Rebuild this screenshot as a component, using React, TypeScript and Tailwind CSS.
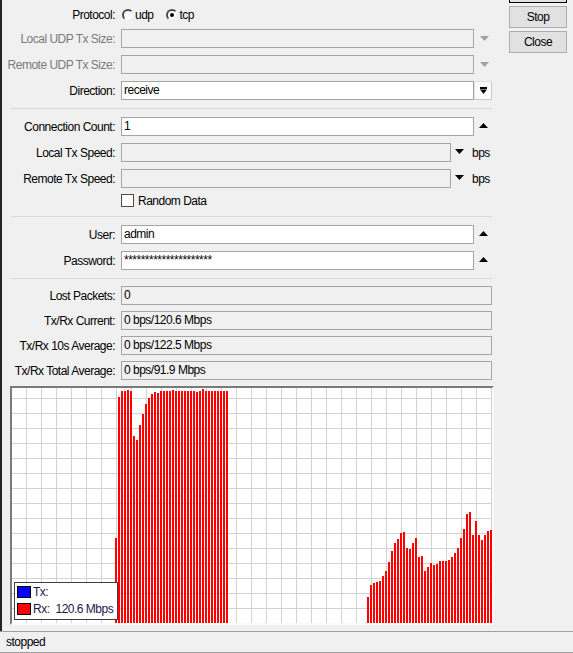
import React from "react";

const leftTops = [
  538, 397, 391, 391, 390, 391, 436, 440, 425, 414, 404, 398, 394, 392, 393, 391, 391, 391, 391, 390,
  391, 391, 391, 391, 391, 391, 391, 392, 391, 389, 391, 391, 391, 391, 391, 391, 391, 391,
];
const rightTops = [
  597, 585, 583, 582, 581, 576, 571, 562, 551, 543, 539, 533, 532, 548, 549, 543, 538, 557, 556, 571,
  567, 563, 565, 564, 561, 561, 561, 560, 557, 553, 548, 538, 529, 514, 512, 535, 521, 535, 540, 535,
  531, 530,
];

function Row({
  label,
  disabled,
  mt,
  children,
}: {
  label?: string;
  disabled?: boolean;
  mt: string;
  children?: React.ReactNode;
}) {
  return (
    <div className={`flex h-[19px] shrink-0 items-center ${mt}`}>
      <div className={`w-[113px] shrink-0 whitespace-nowrap text-right ${disabled ? "text-[#7a7a7a]" : "text-black"}`}>
        {label}
      </div>
      <div className="ml-[6px] flex h-full items-center">{children}</div>
    </div>
  );
}

function Field({ w, white, children }: { w: string; white?: boolean; children?: React.ReactNode }) {
  return (
    <div
      className={`${w} h-[19px] shrink-0 overflow-hidden whitespace-nowrap border border-[#a5a5a5] pl-[2px] leading-[17px] ${
        white ? "bg-white" : "bg-[#f0f0f0]"
      }`}
    >
      {children}
    </div>
  );
}

function Up() {
  return (
    <svg width="9" height="5" viewBox="0 0 9 5" className="block">
      <polygon points="0,5 4.5,0 9,5" fill="#000" />
    </svg>
  );
}

function Down({ color = "#000" }: { color?: string }) {
  return (
    <svg width="9" height="5" viewBox="0 0 9 5" className="block">
      <polygon points="0,0 9,0 4.5,5" fill={color} />
    </svg>
  );
}

function Separator({ mt }: { mt: string }) {
  return <div className={`ml-[9px] h-px w-[481px] shrink-0 bg-[#d9d9d9] ${mt}`} />;
}

function Radio({ checked }: { checked?: boolean }) {
  return (
    <div className="flex h-[12px] w-[12px] items-center justify-center rounded-full border-2 border-b-[#f2f2f2] border-l-[#4a4a4a] border-r-[#f2f2f2] border-t-[#4a4a4a] bg-white">
      {checked && <div className="h-[4px] w-[4px] rounded-full bg-black" />}
    </div>
  );
}

function Chart() {
  const W = 480;
  const H = 235;
  const vlines = Array.from({ length: 32 }, (_, j) => 14 + 15 * j);
  const hlines = Array.from({ length: 15 }, (_, j) => 10 + 15 * j);
  return (
    <div className="relative ml-[8px] mt-[6px] h-[239px] w-[484px] shrink-0 border-2 border-b-[#fafafa] border-l-[#7a7a7a] border-r-[#fafafa] border-t-[#7a7a7a] bg-white">
      <svg width={W} height={H} viewBox={`0 0 ${W} ${H}`} shapeRendering="crispEdges" className="block">
        {vlines.map((x) => (
          <rect key={"v" + x} x={x} y={0} width={1} height={H} fill="#d2d2d2" />
        ))}
        {hlines.map((y) => (
          <rect key={"h" + y} x={0} y={y} width={W} height={1} fill="#d2d2d2" />
        ))}
        {leftTops.map((t, k) => (
          <rect key={"l" + k} x={103 + 3 * k} y={t - 388} width={2} height={623 - t} fill="#ff0000" />
        ))}
        {rightTops.map((t, k) => (
          <rect key={"r" + k} x={355 + 3 * k} y={t - 388} width={2} height={623 - t} fill="#ff0000" />
        ))}
      </svg>
      <div className="absolute left-[2px] top-[194px] flex h-[38px] w-[104px] flex-col border border-[#3c3c3c] bg-white pl-[2px] pt-[3px] text-[#1e1450]">
        <div className="flex h-[12px] items-center">
          <div className="h-[12px] w-[14px] border border-black bg-[#0000ff]" />
          <span className="ml-[2px] leading-none">Tx:</span>
        </div>
        <div className="mt-[5px] flex h-[12px] items-center">
          <div className="h-[12px] w-[14px] border border-black bg-[#ff0000]" />
          <span className="ml-[2px] leading-none">Rx:</span>
          <span className="ml-[6px] leading-none">120.6 Mbps</span>
        </div>
      </div>
    </div>
  );
}

function Button({ label, className }: { label?: string; className: string }) {
  return (
    <div
      className={`flex h-[22px] w-[58px] shrink-0 items-center justify-center border bg-[#e1e1e1] ${className}`}
    >
      {label}
    </div>
  );
}

export default function App() {
  return (
    <div className="flex h-[653px] w-[573px] flex-col overflow-hidden bg-[#f0f0f0] font-['Liberation_Sans',Arial,sans-serif] text-[12px] tracking-[-0.5px] text-black">
      <div className="flex h-[631px] shrink-0">
        <div className="flex h-full w-[500px] shrink-0 flex-col border-l-2 border-[#232323]">
          <Row label="Protocol:" mt="mt-[5px]">
            <div className="ml-[1px] flex items-center">
              <Radio />
              <span className="ml-[1px]">udp</span>
              <div className="ml-[12px]">
                <Radio checked />
              </div>
              <span className="ml-[2px]">tcp</span>
            </div>
          </Row>
          <Row label="Local UDP Tx Size:" disabled mt="mt-[5px]">
            <Field w="w-[353px]" />
            <div className="ml-[6px]">
              <Down color="#a0a0a0" />
            </div>
          </Row>
          <Row label="Remote UDP Tx Size:" disabled mt="mt-[7px]">
            <Field w="w-[353px]" />
            <div className="ml-[6px]">
              <Down color="#a0a0a0" />
            </div>
          </Row>
          <Row label="Direction:" mt="mt-[7px]">
            <Field w="w-[353px]" white>
              receive
            </Field>
            <div className="flex h-[19px] w-[18px] items-center justify-center border border-[#e2e2e2] border-b-[#c9c9c9] border-r-[#c9c9c9] bg-[#fbfbfb]">
              <svg width="7" height="7" viewBox="0 0 7 7" className="block" shapeRendering="crispEdges">
                <rect x="0" y="0" width="7" height="1.5" fill="#000" />
                <polygon points="0,2.5 7,2.5 3.5,7" fill="#000" shapeRendering="auto" />
              </svg>
            </div>
          </Row>
          <Separator mt="mt-[8px]" />
          <Row label="Connection Count:" mt="mt-[8px]">
            <Field w="w-[353px]" white>
              1
            </Field>
            <div className="ml-[5px] -translate-y-[1px]">
              <Up />
            </div>
          </Row>
          <Row label="Local Tx Speed:" mt="mt-[7px]">
            <Field w="w-[330px]" />
            <div className="ml-[4px] -translate-y-[1px]">
              <Down />
            </div>
            <span className="ml-[8px]">bps</span>
          </Row>
          <Row label="Remote Tx Speed:" mt="mt-[7px]">
            <Field w="w-[330px]" />
            <div className="ml-[4px] -translate-y-[1px]">
              <Down />
            </div>
            <span className="ml-[8px]">bps</span>
          </Row>
          <div className="mt-[6px] flex h-[13px] shrink-0 items-center">
            <div className="w-[113px] shrink-0" />
            <div className="ml-[6px] h-[13px] w-[13px] border border-[#4d4d4d] bg-white" />
            <span className="ml-[4px]">Random Data</span>
          </div>
          <Separator mt="mt-[9px]" />
          <Row label="User:" mt="mt-[8px]">
            <Field w="w-[353px]" white>
              admin
            </Field>
            <div className="ml-[5px] -translate-y-[1px]">
              <Up />
            </div>
          </Row>
          <Row label="Password:" mt="mt-[7px]">
            <Field w="w-[353px]" white>
              *********************
            </Field>
            <div className="ml-[5px] -translate-y-[1px]">
              <Up />
            </div>
          </Row>
          <Separator mt="mt-[8px]" />
          <Row label="Lost Packets:" mt="mt-[7px]">
            <Field w="w-[371px]">0</Field>
          </Row>
          <Row label="Tx/Rx Current:" mt="mt-[6px]">
            <Field w="w-[371px]">0 bps/120.6 Mbps</Field>
          </Row>
          <Row label="Tx/Rx 10s Average:" mt="mt-[6px]">
            <Field w="w-[371px]">0 bps/122.5 Mbps</Field>
          </Row>
          <Row label="Tx/Rx Total Average:" mt="mt-[6px]">
            <Field w="w-[371px]">0 bps/91.9 Mbps</Field>
          </Row>
          <Chart />
        </div>
        <div className="ml-[9px] flex w-[58px] shrink-0 flex-col">
          <Button className="mt-[-19px] border-black" />
          <Button label="Stop" className="mt-[3px] border-[#adadad]" />
          <Button label="Close" className="mt-[3px] border-[#adadad]" />
        </div>
      </div>
      <div className="flex h-[22px] shrink-0 items-center border-y border-[#a0a0a0] pl-[6px]">stopped</div>
    </div>
  );
}
